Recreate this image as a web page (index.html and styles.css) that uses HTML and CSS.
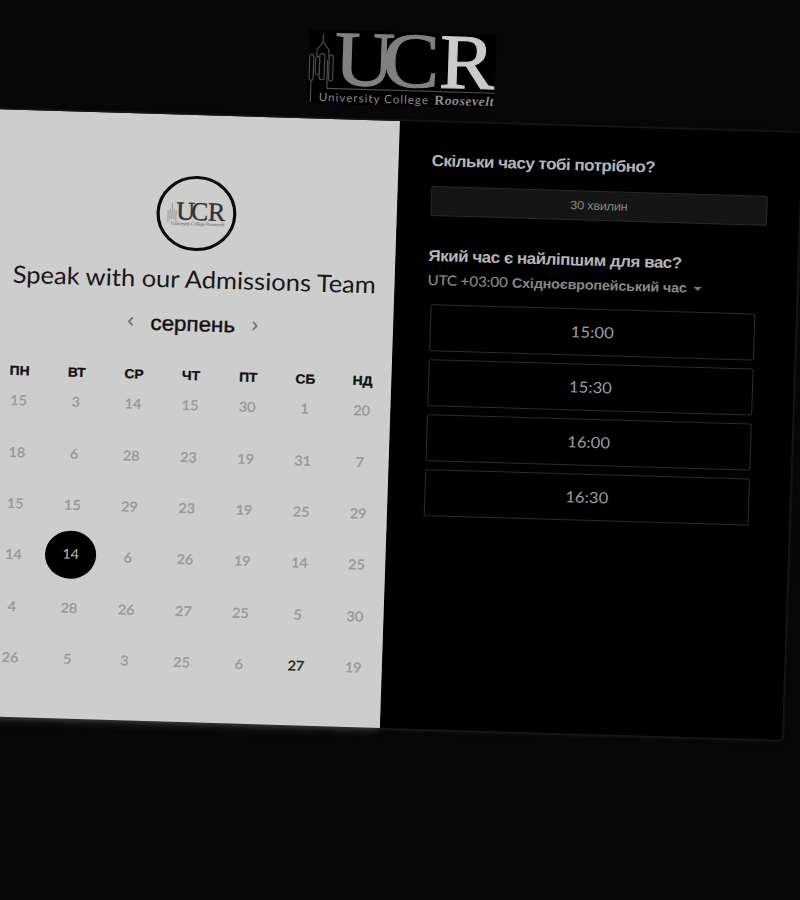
FILE: index.html
```html
<!DOCTYPE html>
<html lang="uk">
<head>
<meta charset="utf-8">
<title>University College Roosevelt</title>
<link rel="stylesheet" href="styles.css">
</head>
<body>
<main class="stage">
  <header class="brand">
    <svg class="logo" viewBox="0 0 187 74" preserveAspectRatio="none">
      <rect width="187" height="74" fill="#000"/>
      <g fill="none" stroke="#4c4c4c" stroke-width="1.200">
        <path d="M3 73V52M19 58.500V30M14 4V12L12 15L8 20V27M14 12L16 15L20 20V27"/>
        <rect x="1" y="25" width="4" height="26" rx="2"/><rect x="7" y="27" width="4" height="18" rx="2"/><rect x="11" y="24" width="5" height="26" rx="2"/><rect x="20.500" y="25" width="4" height="26" rx="2"/>
        <path d="M19 58.500H187"/>
      </g>
      <g class="serif" font-size="78" stroke-width="1.200">
        <text x="26" y="54.500" fill="#808080" stroke="#808080" textLength="60" lengthAdjust="spacingAndGlyphs">U</text>
        <text x="74" y="54.500" fill="#808080" stroke="#808080" textLength="57" lengthAdjust="spacingAndGlyphs">C</text>
        <text x="131" y="54.500" fill="#cacaca" stroke="#cacaca" textLength="55" lengthAdjust="spacingAndGlyphs">R</text>
      </g>
      <text class="sans" x="11.500" y="71.500" font-size="11.500" fill="#8c8c8c" textLength="109" lengthAdjust="spacing">University College</text>
      <text class="serif tagline" x="127" y="71.500" font-size="13.500" fill="#8c8c8c" textLength="59" lengthAdjust="spacing"><tspan class="upright">R</tspan>oosevelt</text>
    </svg>
  </header>
  <div class="card">
    <section class="calendar">
      <div class="badge">
        <svg class="badge-logo" viewBox="0 0 60 30" preserveAspectRatio="none">
          <path d="M1 23V11M3 20V9M5 20V4M7 20V9M9 22V11" fill="none" stroke="#999" stroke-width="1"/>
          <g class="serif" font-size="26" fill="#333" stroke="#333" stroke-width=".4">
            <text x="9" y="20">U</text><text x="24" y="20">C</text><text x="41" y="20">R</text>
          </g>
          <text class="serif" x="4" y="25.500" font-size="5" fill="#555" textLength="54">University College Roosevelt</text>
        </svg>
      </div>
      <h1 class="title">Speak with our Admissions Team</h1>
      <div class="month">
        <svg class="chevron" viewBox="0 0 8 12"><path d="M6 2L2.500 6l3.500 4"/></svg>
        <span class="month-name">серпень</span>
        <svg class="chevron next" viewBox="0 0 8 12"><path d="M2 2l3.500 4L2 10"/></svg>
      </div>
      <div class="weekdays"><span>ПН</span><span>ВТ</span><span>СР</span><span>ЧТ</span><span>ПТ</span><span>СБ</span><span>НД</span></div>
      <div class="days">
        <span>15</span><span>3</span><span>14</span><span>15</span><span>30</span><span>1</span><span>20</span>
        <span>18</span><span>6</span><span>28</span><span>23</span><span>19</span><span>31</span><span>7</span>
        <span>15</span><span>15</span><span>29</span><span>23</span><span>19</span><span>25</span><span>29</span>
        <span>14</span><span class="selected">14</span><span>6</span><span>26</span><span>19</span><span>14</span><span>25</span>
        <span>4</span><span>28</span><span>26</span><span>27</span><span>25</span><span>5</span><span>30</span>
        <span>26</span><span>5</span><span>3</span><span>25</span><span>6</span><span class="open">27</span><span>19</span>
      </div>
    </section>
    <section class="times">
      <h2 class="question">Скільки часу тобі потрібно?</h2>
      <div class="duration">30 хвилин</div>
      <h2 class="question best">Який час є найліпшим для вас?</h2>
      <div class="zone"><span class="utc">UTC +03:00</span><span class="zone-name">Східноєвропейський час</span><i class="caret"></i></div>
      <div class="slots">
        <div class="slot">15:00</div>
        <div class="slot">15:30</div>
        <div class="slot">16:00</div>
        <div class="slot">16:30</div>
      </div>
    </section>
  </div>
</main>
</body>
</html>
```
FILE: styles.css
```css
* { box-sizing: border-box; }
html, body { margin: 0; height: 900px; overflow: hidden; background: #070707; }
body { font-family: "Liberation Sans", sans-serif; }
.stage {
  width: 751px;
  height: 900px;
  transform-origin: 0 0;
  transform: matrix(1.065, 0.0314, -0.033, 1, 4, -11.8);
}
.serif { font-family: "Liberation Serif", serif; }
.sans { font-family: Lato, sans-serif; }
.tagline { font-style: italic; font-weight: bold; }
.upright { font-style: normal; }
.brand { height: 121px; padding-top: 32px; display: flex; justify-content: center; align-items: flex-start; }
.logo { width: 175.6px; height: 74px; display: block; overflow: visible; }
.card {
  display: flex;
  width: 755px;
  height: 607px;
  margin-left: -2px;
  background: #000;
  border-radius: 3px;
  box-shadow: 0 0 2px 1px #1c1c1c, 0 1px 4px #1c1c1c;
}
.calendar {
  width: 377.5px;
  background: #cdcdcd;
  display: flex;
  flex-direction: column;
  align-items: center;
  padding: 61px 0 0 1.500px;
  box-shadow: 0 3px 9px -2px #444;
  clip-path: inset(0 0 -20px 0);
}
.badge {
  width: 75px; height: 75px;
  border: 3px solid #0a0a0a;
  border-radius: 50%;
  display: flex; align-items: center; justify-content: center;
}
.badge-logo { width: 56px; height: 30px; margin-top: 2px; overflow: visible; }
.title {
  margin: 11px 0 0;
  font: 400 24px/34px Lato, sans-serif;
  letter-spacing: -.03px;
  color: #181818;
  white-space: nowrap;
}
.month { margin-top: 13px; height: 30px; display: flex; align-items: center; gap: 15px; }
.month-name { font-size: 21px; line-height: 30px; color: #111; -webkit-text-stroke: .4px #111; }
.chevron { width: 8px; height: 12px; margin-top: -3px; fill: none; stroke: #777; stroke-width: 1.8; }
.next { margin-top: -1px; }
.weekdays, .days { display: grid; grid-template-columns: repeat(7, 53.7px); }
.weekdays { margin-top: 27px; font-size: 13px; font-weight: bold; line-height: 20px; text-align: center; color: #111; -webkit-text-stroke: .3px #111; }
.days {
  margin: -6.5px 0 0 0;
  grid-auto-rows: 51.4px; justify-items: center; align-items: center;
  font: 400 13.500px/48px Lato, sans-serif; letter-spacing: 0;
  color: #989898; -webkit-text-stroke: .35px #989898;
}
.days .selected { width: 48px; height: 48px; margin-top: -2px; border-radius: 50%; background: #000; color: #bbb; text-align: center; line-height: 47px; -webkit-text-stroke: 0; }
.days .open { color: #222; -webkit-text-stroke-color: #222; }
.times { flex: 1; padding: 29px 30px 0 31px; }
.question { margin: 0; font-size: 16px; line-height: 20px; letter-spacing: -.49px; color: #b5b5b5; white-space: nowrap; }
.duration {
  margin-top: 15px; height: 30px; width: 316.5px;
  border: 1px solid #292929; border-radius: 2px; background: #151515;
  color: #858585; font-size: 12px; letter-spacing: -.25px; line-height: 29px; text-align: center;
}
.best { margin-top: 30px; }
.zone { height: 20px; margin-top: 4px; display: flex; align-items: center; color: #888; font-size: 13.500px; white-space: nowrap; }
.utc { font: 400 14px/20px Lato, sans-serif; letter-spacing: 0; margin-right: 4px; -webkit-text-stroke: .2px #888; }
.zone-name { font-weight: bold; letter-spacing: -.18px; }
.caret { margin: 2px 0 0 6px; border: 4px solid transparent; border-top-color: #777; border-bottom: 0; }
.slots { margin: 14px 0 0 3.500px; display: grid; gap: 8.1px; }
.slot {
  width: 305px; height: 47px;
  border: 1px solid #2b2b2b; border-radius: 2px;
  font: 400 15.500px/44px Lato, sans-serif; letter-spacing: .1px;
  color: #9d9d9d; text-align: center;
}
```
